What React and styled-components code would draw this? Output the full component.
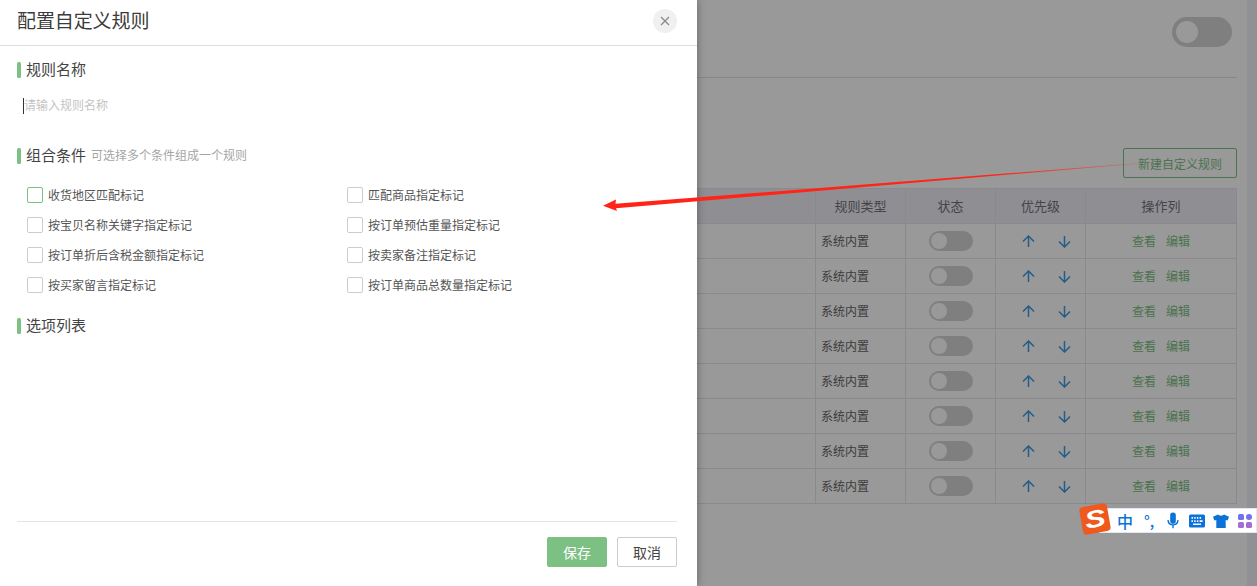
import React from "react";
import styled, { createGlobalStyle } from "styled-components";

const FONT = `"Noto Sans CJK SC", "Liberation Sans", sans-serif`;

const Global = createGlobalStyle`
  html, body { margin: 0; padding: 0; background: #fff; }
  * { box-sizing: border-box; }
`;

const Screen = styled.div`
  position: relative;
  width: 1257px;
  height: 586px;
  overflow: hidden;
  display: flex;
  font-family: ${FONT};
  color: #666;
  font-size: 12px;
`;

/* ---------- page behind the drawer ---------- */
const Main = styled.main`
  flex: 1;
  padding: 17px 10px 0 20px;
`;
const PageScroll = styled.div`
  width: 10px;
  background: #f2f2f9;
`;
const TopBar = styled.div`
  display: flex;
  justify-content: flex-end;
  height: 61px;
  padding-right: 5px;
  border-bottom: 1px solid #e2e2e2;
`;
const Toggle = styled.span`
  position: relative;
  display: block;
  width: ${(p) => (p.$large ? 60 : 44)}px;
  height: ${(p) => (p.$large ? 30 : 20)}px;
  border-radius: 15px;
  background: #d4d4d4;
  &::after {
    content: "";
    position: absolute;
    left: ${(p) => (p.$large ? 4 : 2)}px;
    top: ${(p) => (p.$large ? 4 : 2)}px;
    width: ${(p) => (p.$large ? 22 : 16)}px;
    height: ${(p) => (p.$large ? 22 : 16)}px;
    border-radius: 50%;
    background: #fff;
  }
`;
const Actions = styled.div`
  display: flex;
  justify-content: flex-end;
  padding-top: 70px;
  margin-bottom: 10px;
`;
const NewButton = styled.button`
  width: 114px;
  height: 30px;
  padding: 0;
  background: #fff;
  border: 1px solid #7cc084;
  border-radius: 2px;
  color: #7cc084;
  font: 12px ${FONT};
`;
const Table = styled.div`
  border-left: 1px solid #e6e6ed;
`;
const Row = styled.div`
  display: grid;
  grid-template-columns: 1fr 90px 90px 90px 151px;
  height: ${(p) => (p.$head ? 36 : 35)}px;
  background: ${(p) => (p.$head ? "#eeeef6" : "#fff")};
  border-top: ${(p) => (p.$head ? "1px solid #e6e6ed" : "0")};
`;
const Cell = styled.div`
  display: flex;
  align-items: center;
  justify-content: ${(p) => (p.$left ? "flex-start" : "center")};
  padding-left: ${(p) => (p.$left ? 5 : 0)}px;
  border-right: 1px solid #e6e6ed;
  border-bottom: 1px solid #e6e6ed;
`;
const TextCell = styled(Cell)`
  padding-bottom: 2px;
`;
const HeadCell = styled(Cell)`
  padding-bottom: 2px;
  font-size: 13px;
  color: #737378;
`;
const SortCell = styled(Cell)`
  gap: 23px;
  padding-left: 12px;
`;
const OpCell = styled(Cell)`
  gap: 10px;
  padding-bottom: 2px;
`;
const OpLink = styled.a`
  color: #7cc084;
  font-size: 12px;
`;
const SortIcon = styled.svg`
  width: 13px;
  height: 13px;
  fill: none;
  stroke: #3d9be0;
  stroke-width: 1.5;
`;

const Scrim = styled.div`
  position: absolute;
  inset: 0;
  background: rgba(0, 0, 0, 0.4);
`;

/* ---------- drawer ---------- */
const Drawer = styled.aside`
  position: absolute;
  left: 0;
  top: 0;
  bottom: 0;
  width: 697px;
  display: flex;
  flex-direction: column;
  background: #fff;
  box-shadow: 0 0 8px rgba(0, 0, 0, 0.35);
`;
const DrawerHead = styled.header`
  flex: none;
  display: flex;
  align-items: center;
  justify-content: space-between;
  height: 46px;
  padding: 0 20px 4px 17px;
  border-bottom: 1px solid #ddd;
`;
const Title = styled.h1`
  margin: 0 0 2px;
  font-size: 19px;
  line-height: 26px;
  font-weight: 400;
  color: #3b3b3b;
  letter-spacing: -0.1px;
`;
const Close = styled.button`
  display: flex;
  align-items: center;
  justify-content: center;
  width: 24px;
  height: 24px;
  padding: 0;
  border: 0;
  border-radius: 50%;
  background: #f0f0f0;
`;
const DrawerBody = styled.div`
  flex: 1;
  padding: 15px 17px 0;
`;
const SectionTitle = styled.div`
  display: flex;
  align-items: center;
  height: 17px;
  gap: 5px;
  font-size: 15px;
  line-height: 17px;
  color: #444;
  &::before {
    content: "";
    width: 4px;
    height: 16px;
    border-radius: 1.5px;
    background: #7cc084;
  }
`;
const SectionText = styled.span`
  position: relative;
  top: -1.5px;
`;
const Hint = styled.span`
  position: relative;
  top: -1.5px;
  font-size: 12px;
  color: #a5a5a5;
`;
const NameField = styled.div`
  display: flex;
  align-items: center;
  height: 16px;
  margin: 20px 0 33px 6px;
`;
const Caret = styled.span`
  flex: none;
  width: 1px;
  height: 16px;
  background: #333;
`;
const NameInput = styled.input`
  flex: 1;
  border: 0;
  padding: 0 0 4px;
  outline: 0;
  font: 12px ${FONT};
  &::placeholder { color: #c4c4c4; opacity: 1; }
`;
const Options = styled.div`
  display: grid;
  grid-template-columns: 320px 1fr;
  grid-auto-rows: 30px;
  margin: 23px 0 10px 10px;
`;
const Option = styled.label`
  display: flex;
  align-items: center;
  height: 16px;
  gap: 5px;
  font-size: 12px;
  color: #555;
`;
const OptionText = styled.span`
  position: relative;
  top: -1px;
`;
const Box = styled.span`
  flex: none;
  width: 16px;
  height: 16px;
  border: 1px solid ${(p) => (p.$active ? "#7cc084" : "#ccc")};
  border-radius: 2px;
  background: #fff;
`;
const DrawerFoot = styled.footer`
  flex: none;
  display: flex;
  justify-content: flex-end;
  gap: 10px;
  margin: 0 20px 0 17px;
  padding: 15px 0 19px;
  border-top: 1px solid #e3e3ea;
`;
const FootButton = styled.button`
  width: 60px;
  height: 30px;
  padding: 0;
  border-radius: 2px;
  border: 1px solid ${(p) => (p.$primary ? "#7cc084" : "#ccc")};
  background: ${(p) => (p.$primary ? "#7cc084" : "#fff")};
  color: ${(p) => (p.$primary ? "#fff" : "#444")};
  font: 14px ${FONT};
`;

/* ---------- annotation arrow ---------- */
const Annotation = styled.svg`
  position: absolute;
  left: 0;
  top: 0;
  width: 1257px;
  height: 586px;
  pointer-events: none;
`;

/* ---------- IME bar ---------- */
const ImeBar = styled.div`
  position: absolute;
  right: 0;
  top: 508px;
  width: 158px;
  height: 25px;
  display: flex;
  align-items: center;
  padding-left: 13px;
  background: #fff;
  border: 1px solid #dfe8f5;
`;
const ImeLogo = styled.div`
  position: absolute;
  left: -19px;
  top: -4px;
  width: 28px;
  height: 28px;
  display: flex;
  align-items: center;
  justify-content: center;
  border-radius: 4px;
  background: #f0591e;
  transform: rotate(-10deg);
  color: #fff;
  font: italic 700 24px "Liberation Sans", sans-serif;
`;
const ImeLogoLetter = styled.span`
  display: block;
  transform: scaleX(1.3);
`;
const ImeItem = styled.span`
  flex: none;
  width: 24px;
  display: flex;
  align-items: center;
  justify-content: center;
  color: #0a72d8;
  font-size: ${(p) => p.$size || 16}px;
  font-weight: 500;
  line-height: 1;
`;
const ImeIcon = styled.svg`
  display: block;
  width: ${(p) => p.$size || 16}px;
  height: ${(p) => p.$size || 16}px;
  fill: currentColor;
`;

const columns = ["规则类型", "状态", "优先级", "操作列"];
const rows = Array.from({ length: 8 }, (_, i) => i);
const optionList = [
  ["收货地区匹配标记", true],
  ["匹配商品指定标记"],
  ["按宝贝名称关键字指定标记"],
  ["按订单预估重量指定标记"],
  ["按订单折后含税金额指定标记"],
  ["按卖家备注指定标记"],
  ["按买家留言指定标记"],
  ["按订单商品总数量指定标记"],
];

const Up = () => (
  <SortIcon viewBox="0 0 13 13">
    <path d="M6.5 12V1.500M1 6.500l5.500-5.500 5.500 5.500" />
  </SortIcon>
);
const Down = () => (
  <SortIcon viewBox="0 0 13 13">
    <path d="M6.500 1v10.500M1 6.500l5.500 5.500 5.500-5.500" />
  </SortIcon>
);

export default function App() {
  return (
    <Screen>
      <Global />
      <Main>
        <TopBar>
          <Toggle $large />
        </TopBar>
        <Actions>
          <NewButton>新建自定义规则</NewButton>
        </Actions>
        <Table>
          <Row $head>
            <HeadCell />
            {columns.map((c) => (
              <HeadCell key={c}>{c}</HeadCell>
            ))}
          </Row>
          {rows.map((r) => (
            <Row key={r}>
              <Cell />
              <TextCell $left>系统内置</TextCell>
              <Cell>
                <Toggle />
              </Cell>
              <SortCell>
                <Up />
                <Down />
              </SortCell>
              <OpCell>
                <OpLink>查看</OpLink>
                <OpLink>编辑</OpLink>
              </OpCell>
            </Row>
          ))}
        </Table>
      </Main>
      <PageScroll />
      <Scrim />

      <Drawer>
        <DrawerHead>
          <Title>配置自定义规则</Title>
          <Close aria-label="关闭">
            <svg width="10" height="10" viewBox="0 0 10 10" fill="none" stroke="#8a8a8a" strokeWidth="1.3">
              <path d="M1 1l8 8M9 1l-8 8" />
            </svg>
          </Close>
        </DrawerHead>
        <DrawerBody>
          <SectionTitle>
            <SectionText>规则名称</SectionText>
          </SectionTitle>
          <NameField>
            <Caret />
            <NameInput placeholder="请输入规则名称" />
          </NameField>
          <SectionTitle>
            <SectionText>组合条件</SectionText>
            <Hint>可选择多个条件组成一个规则</Hint>
          </SectionTitle>
          <Options>
            {optionList.map(([text, active]) => (
              <Option key={text}>
                <Box $active={active} />
                <OptionText>{text}</OptionText>
              </Option>
            ))}
          </Options>
          <SectionTitle>
            <SectionText>选项列表</SectionText>
          </SectionTitle>
        </DrawerBody>
        <DrawerFoot>
          <FootButton $primary>保存</FootButton>
          <FootButton>取消</FootButton>
        </DrawerFoot>
      </Drawer>

      <Annotation viewBox="0 0 1257 586">
        <defs>
          <linearGradient id="tail" x1="603" y1="0" x2="1137" y2="0" gradientUnits="userSpaceOnUse">
            <stop offset="0" stopColor="#ff2417" />
            <stop offset="0.72" stopColor="#ff2417" />
            <stop offset="1" stopColor="#ff2417" stopOpacity="0.35" />
          </linearGradient>
        </defs>
        <polygon
          fill="url(#tail)"
          points="1137,163.3 1137,163.7 616,208.2 617,211 603,205.7 616,199.500 615.500,203.800"
        />
      </Annotation>

      <ImeBar>
        <ImeLogo>
          <ImeLogoLetter>S</ImeLogoLetter>
        </ImeLogo>
        <ImeItem>中</ImeItem>
        <ImeItem $size={15}>°,</ImeItem>
        <ImeItem>
          <ImeIcon $size={18} viewBox="0 0 16 16">
            <rect x="5.500" y="0.500" width="5" height="10" rx="2.500" />
            <path d="M3 7h1.200a3.800 3.800 0 0 0 7.600 0H13a5 5 0 0 1-4.400 5v2.500h-1.200V12A5 5 0 0 1 3 7z" />
          </ImeIcon>
        </ImeItem>
        <ImeItem>
          <ImeIcon viewBox="0 0 16 16">
            <path
              fillRule="evenodd"
              d="M1.500 1.500h13A1.500 1.500 0 0 1 16 3v10a1.500 1.500 0 0 1-1.500 1.500h-13A1.500 1.500 0 0 1 0 13V3a1.500 1.500 0 0 1 1.500-1.500zM2.500 4v1.800H4V4zM5.200 4v1.800h1.500V4zM7.900 4v1.800h1.500V4zM10.600 4v1.800h1.500V4zM2.500 7.200V9H4V7.200zM5.200 7.200V9h1.500V7.200zM7.900 7.200V9h1.500V7.200zM10.600 7.200V9h3V7.200zM4 10.500V12h8v-1.500z"
            />
          </ImeIcon>
        </ImeItem>
        <ImeItem>
          <ImeIcon viewBox="0 0 16 16">
            <path d="M5 1.500C6 3 10 3 11 1.500l5 2.200-1.300 3.800-2-.6V15H3.300V6.900l-2 .6L0 3.700z" />
          </ImeIcon>
        </ImeItem>
        <ImeItem>
          <svg width="16" height="16" viewBox="0 0 16 16">
            <rect x="1" y="1" width="6" height="6" rx="1.500" fill="#6f74ee" />
            <rect x="9" y="1" width="6" height="6" rx="3" fill="#6f74ee" />
            <rect x="1" y="9" width="6" height="6" rx="1.500" fill="#a46fd0" />
            <rect x="9" y="9" width="6" height="6" rx="1.500" fill="#a46fd0" />
          </svg>
        </ImeItem>
      </ImeBar>
    </Screen>
  );
}
